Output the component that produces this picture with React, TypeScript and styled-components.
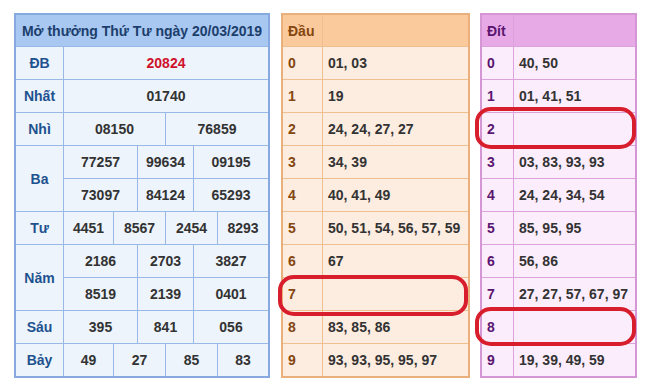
import React from "react";
import styled, { createGlobalStyle } from "styled-components";

const Global = createGlobalStyle`
  html, body { margin: 0; padding: 0; background: #fff; }
  body { font-family: "Liberation Sans", Arial, sans-serif; }
`;

const Page = styled.div`
  position: relative;
  display: flex;
  align-items: flex-start;
  padding: 13px 0 0 14px;
  width: 647px;
  height: 389px;
  box-sizing: border-box;
`;

const LeftGrid = styled.div`
  display: grid;
  grid-template-columns: 47px 49px 23px 27px 27px 23px 50px;
  grid-template-rows: 31px repeat(10, 32px);
  gap: 1px;
  background: #98b8e6;
  border: 2px solid #86a9e0;
  width: 256px;
  box-sizing: border-box;
`;

const LCell = styled.div<{ $c: string; $r?: string; $head?: boolean; $label?: boolean; $red?: boolean }>`
  grid-column: ${(p) => p.$c};
  grid-row: ${(p) => p.$r ?? "auto"};
  background: ${(p) => (p.$head ? "#a8c8f1" : "#eef4fc")};
  display: flex;
  align-items: center;
  justify-content: center;
  font-weight: bold;
  font-size: 14px;
  color: ${(p) => (p.$red ? "#d0112b" : p.$label ? "#1d528f" : p.$head ? "#1c3e6c" : "#333")};
  white-space: nowrap;
`;

const SideGrid = styled.div<{ $cols: string; $line: string; $edge: string; $ml: number }>`
  display: grid;
  grid-template-columns: ${(p) => p.$cols};
  grid-template-rows: 31px repeat(10, 32px);
  gap: 1px;
  background: ${(p) => p.$line};
  border: 2px solid ${(p) => p.$edge};
  margin-left: ${(p) => p.$ml}px;
`;

const SCell = styled.div<{ $bg: string; $fg: string }>`
  background: ${(p) => p.$bg};
  color: ${(p) => p.$fg};
  display: flex;
  align-items: center;
  padding-left: 5px;
  font-weight: bold;
  font-size: 14px;
  white-space: nowrap;
`;

const Oval = styled.div<{ $x: number; $y: number; $w: number; $h: number }>`
  position: absolute;
  left: ${(p) => p.$x}px;
  top: ${(p) => p.$y}px;
  width: ${(p) => p.$w}px;
  height: ${(p) => p.$h}px;
  border: 4px solid #d81e2c;
  border-radius: 16px / 15px;
  box-sizing: border-box;
  pointer-events: none;
`;

type Row = { label: string; cells: { c: string; v: string }[][] };

const rows: Row[] = [
  { label: "ĐB", cells: [[{ c: "2 / 8", v: "20824" }]] },
  { label: "Nhất", cells: [[{ c: "2 / 8", v: "01740" }]] },
  { label: "Nhì", cells: [[{ c: "2 / 5", v: "08150" }, { c: "5 / 8", v: "76859" }]] },
  {
    label: "Ba",
    cells: [
      [{ c: "2 / 4", v: "77257" }, { c: "4 / 6", v: "99634" }, { c: "6 / 8", v: "09195" }],
      [{ c: "2 / 4", v: "73097" }, { c: "4 / 6", v: "84124" }, { c: "6 / 8", v: "65293" }],
    ],
  },
  {
    label: "Tư",
    cells: [[{ c: "2 / 3", v: "4451" }, { c: "3 / 5", v: "8567" }, { c: "5 / 7", v: "2454" }, { c: "7 / 8", v: "8293" }]],
  },
  {
    label: "Năm",
    cells: [
      [{ c: "2 / 4", v: "2186" }, { c: "4 / 6", v: "2703" }, { c: "6 / 8", v: "3827" }],
      [{ c: "2 / 4", v: "8519" }, { c: "4 / 6", v: "2139" }, { c: "6 / 8", v: "0401" }],
    ],
  },
  { label: "Sáu", cells: [[{ c: "2 / 4", v: "395" }, { c: "4 / 6", v: "841" }, { c: "6 / 8", v: "056" }]] },
  {
    label: "Bảy",
    cells: [[{ c: "2 / 3", v: "49" }, { c: "3 / 5", v: "27" }, { c: "5 / 7", v: "85" }, { c: "7 / 8", v: "83" }]],
  },
];

const dau = ["01, 03", "19", "24, 24, 27, 27", "34, 39", "40, 41, 49", "50, 51, 54, 56, 57, 59", "67", "", "83, 85, 86", "93, 93, 95, 95, 97"];
const dit = ["40, 50", "01, 41, 51", "", "03, 83, 93, 93", "24, 24, 34, 54", "85, 95, 95", "56, 86", "27, 27, 57, 67, 97", "", "19, 39, 49, 59"];

function PrizeTable() {
  const out: React.ReactNode[] = [
    <LCell key="h" $c="1 / 8" $head>
      Mở thưởng Thứ Tư ngày 20/03/2019
    </LCell>,
  ];
  let r = 2;
  rows.forEach((row) => {
    const n = row.cells.length;
    out.push(
      <LCell key={row.label} $c="1 / 2" $r={`${r} / ${r + n}`} $label>
        {row.label}
      </LCell>
    );
    row.cells.forEach((line, i) =>
      line.forEach((cell, j) =>
        out.push(
          <LCell key={`${row.label}-${i}-${j}`} $c={cell.c} $r={`${r + i}`} $red={row.label === "ĐB"}>
            {cell.v}
          </LCell>
        )
      )
    );
    r += n;
  });
  return <LeftGrid>{out}</LeftGrid>;
}

function SideTable(props: {
  title: string;
  data: string[];
  cols: string;
  line: string;
  edge: string;
  head: string;
  bg: string;
  labelFg: string;
  ml: number;
}) {
  const { title, data, cols, line, edge, head, bg, labelFg, ml } = props;
  return (
    <SideGrid $cols={cols} $line={line} $edge={edge} $ml={ml}>
      <SCell $bg={head} $fg={labelFg}>{title}</SCell>
      <SCell $bg={head} $fg="#333" />
      {data.map((d, i) => (
        <React.Fragment key={i}>
          <SCell $bg={bg} $fg={labelFg}>{i}</SCell>
          <SCell $bg={bg} $fg="#333">{d}</SCell>
        </React.Fragment>
      ))}
    </SideGrid>
  );
}

export default function App() {
  return (
    <>
      <Global />
      <Page>
        <PrizeTable />
        <SideTable
          title="Đầu"
          data={dau}
          cols="39px 145px"
          line="#efbf91"
          edge="#e9b07c"
          head="#fbca9c"
          bg="#fdece0"
          labelFg="#84470f"
          ml={11}
        />
        <SideTable
          title="Đít"
          data={dit}
          cols="31px 121px"
          line="#dda2dd"
          edge="#d596d5"
          head="#e8aae7"
          bg="#fcedfc"
          labelFg="#5b1670"
          ml={10}
        />
        <Oval $x={278} $y={275} $w={190} $h={41} />
        <Oval $x={475} $y={107} $w={161} $h={42} />
        <Oval $x={475} $y={307} $w={161} $h={39} />
      </Page>
    </>
  );
}
